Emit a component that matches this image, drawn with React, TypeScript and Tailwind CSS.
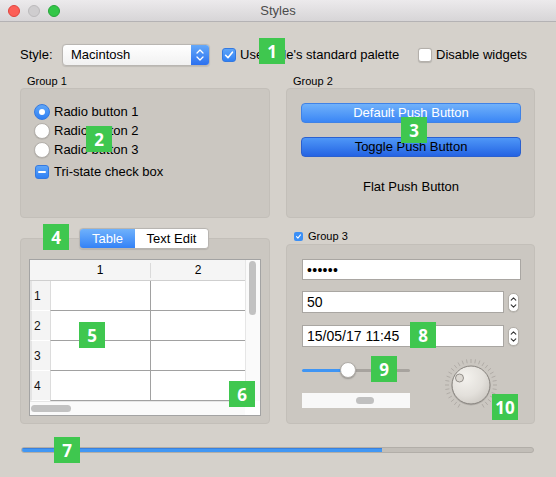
import React from "react";

function Check({ size = 14, small = false }: { size?: number; small?: boolean }) {
  return (
    <div
      className={
        small
          ? "w-[9px] h-[9px] rounded-[2px] bg-[#3b8ff6] flex items-center justify-center shrink-0"
          : "w-[14px] h-[14px] rounded-[3px] bg-linear-to-b from-[#5ea5f8] to-[#2f80f4] border border-[#3479e0] flex items-center justify-center shrink-0"
      }
    >
      <svg width={size - 2} height={size - 2} viewBox="0 0 12 12">
        <path d="M2.6 6.3 L5 8.7 L9.4 3.2" fill="none" stroke="white" strokeWidth={small ? 1.8 : 1.6} strokeLinecap="round" strokeLinejoin="round" />
      </svg>
    </div>
  );
}

function Radio({ on }: { on?: boolean }) {
  return on ? (
    <div className="w-[16px] h-[16px] rounded-full bg-linear-to-b from-[#5fa6f8] to-[#2f80f4] border border-[#3479e0] flex items-center justify-center shrink-0">
      <div className="w-[6px] h-[6px] rounded-full bg-white" />
    </div>
  ) : (
    <div className="w-[16px] h-[16px] rounded-full bg-white border border-[#b4b0ab] shadow-[0_0.5px_1px_rgba(0,0,0,0.15)] shrink-0" />
  );
}

function Spin() {
  return (
    <div className="w-[11px] h-[19px] rounded-[5px] bg-white border border-[#b3afa9] shadow-[0_0.5px_1px_rgba(0,0,0,0.15)] shrink-0">
      <svg width="9" height="17" viewBox="0 0 9 17">
        <path d="M2.2 6.2 L4.5 3.9 L6.8 6.2" fill="none" stroke="#333" strokeWidth="1.1" strokeLinecap="round" strokeLinejoin="round" />
        <path d="M2.2 10.8 L4.5 13.1 L6.8 10.8" fill="none" stroke="#333" strokeWidth="1.1" strokeLinecap="round" strokeLinejoin="round" />
      </svg>
    </div>
  );
}

function Badge({ n, cls }: { n: string; cls: string }) {
  return (
    <div
      className={
        "absolute h-[26px] w-[26px] bg-[#3fc74f] text-white font-bold text-[17px] leading-none flex items-center justify-center font-['Open_Sans',sans-serif] " +
        cls
      }
    >
      {n}
    </div>
  );
}

function Dial() {
  const ticks = [] as React.ReactElement[];
  for (let a = -150; a <= 150; a += 10) {
    const r = (a * Math.PI) / 180;
    const s = Math.sin(r);
    const c = -Math.cos(r);
    ticks.push(
      <line key={a} x1={30 + s * 22} y1={30 + c * 22} x2={30 + s * 26} y2={30 + c * 26} stroke="#a9a59f" strokeWidth="0.8" />
    );
  }
  return (
    <svg width="60" height="60" viewBox="0 0 60 60" className="shrink-0">
      <defs>
        <radialGradient id="dg" cx="0.35" cy="0.3" r="0.8">
          <stop offset="0" stopColor="#f4f2ee" />
          <stop offset="0.6" stopColor="#e3e0db" />
          <stop offset="1" stopColor="#cbc7c1" />
        </radialGradient>
      </defs>
      {ticks}
      <circle cx="30" cy="31" r="19.5" fill="rgba(0,0,0,0.12)" />
      <circle cx="30" cy="30" r="19" fill="url(#dg)" stroke="#87837e" strokeWidth="1" />
      <circle cx="18.5" cy="23" r="4" fill="#dcd8d2" stroke="#8a8680" strokeWidth="0.9" />
    </svg>
  );
}

export default function App() {
  const rows = ["1", "2", "3", "4"];
  return (
    <div className="w-[556px] h-[477px] relative overflow-hidden bg-[#d5d1cb] font-['Liberation_Sans',Arial,sans-serif] text-[13px] text-black">
      {/* Title bar */}
      <div className="h-[22px] grid grid-cols-[1fr_auto_1fr] items-center bg-linear-to-b from-[#eceaec] to-[#d7d5d7] border-b border-[#b4b2b4]">
        <div className="flex items-center gap-[8px] pl-[8px]">
          <div className="w-[12px] h-[12px] rounded-full bg-[#fc5f57] border border-[#e0443e]" />
          <div className="w-[12px] h-[12px] rounded-full bg-[#cfcdcf] border border-[#bcbabc]" />
          <div className="w-[12px] h-[12px] rounded-full bg-[#33c748] border border-[#27a53a]" />
        </div>
        <div className="text-[13px] text-[#4b4b4b] leading-none">Styles</div>
        <div />
      </div>

      {/* Row 1 */}
      <div className="mt-[22px] h-[22px] flex items-center pl-[20px]">
        <span className="w-[42px]">Style:</span>
        <div className="w-[148px] h-[22px] flex rounded-[4px] border border-[#b9b6b2] bg-linear-to-b from-white to-[#f1f1f1] shadow-[0_0.5px_1px_rgba(0,0,0,0.1)] overflow-hidden">
          <div className="flex-1 flex items-center pl-[8px]">Macintosh</div>
          <div className="w-[18px] h-full bg-linear-to-b from-[#64a8f9] to-[#2c70ef] flex items-center justify-center">
            <svg width="10" height="16" viewBox="0 0 10 16">
              <path d="M2 6 L5 3 L8 6" fill="none" stroke="white" strokeWidth="1.3" strokeLinecap="round" strokeLinejoin="round" />
              <path d="M2 10 L5 13 L8 10" fill="none" stroke="white" strokeWidth="1.3" strokeLinecap="round" strokeLinejoin="round" />
            </svg>
          </div>
        </div>
        <div className="ml-[12px]">
          <Check />
        </div>
        <span className="ml-[4px] inline-block w-[168px] whitespace-nowrap">Use style's standard palette</span>
        <div className="ml-[10px] w-[14px] h-[14px] rounded-[3px] bg-white border border-[#b4b0ab] shadow-[0_0.5px_1px_rgba(0,0,0,0.15)]" />
        <span className="ml-[4px] whitespace-nowrap">Disable widgets</span>
      </div>

      {/* Groups 1 & 2 */}
      <div className="flex gap-[16px] px-[20px] mt-[8px]">
        <div className="w-[250px] flex flex-col">
          <div className="h-[14px] pl-[7px] text-[11px] leading-[14px]">Group 1</div>
          <div className="h-[130px] rounded-[4px] bg-[#cbc7c1] border border-[#c3bfb9] pt-[13px] pl-[13px] flex flex-col">
            <div className="h-[19px] flex items-center gap-[4px]">
              <Radio on />
              <span>Radio button 1</span>
            </div>
            <div className="h-[19px] flex items-center gap-[4px]">
              <Radio />
              <span>Radio button 2</span>
            </div>
            <div className="h-[19px] flex items-center gap-[4px]">
              <Radio />
              <span>Radio button 3</span>
            </div>
            <div className="h-[19px] mt-[3px] flex items-center gap-[5px] pl-[1px]">
              <div className="w-[14px] h-[14px] rounded-[3px] bg-linear-to-b from-[#5ea5f8] to-[#2f80f4] border border-[#3479e0] flex items-center justify-center">
                <div className="w-[8px] h-[2px] bg-white rounded-[1px]" />
              </div>
              <span>Tri-state check box</span>
            </div>
          </div>
        </div>
        <div className="w-[249px] flex flex-col">
          <div className="h-[14px] pl-[7px] text-[11px] leading-[14px]">Group 2</div>
          <div className="h-[130px] rounded-[4px] bg-[#cbc7c1] border border-[#c3bfb9] pt-[14px] pl-[14px] pr-[13px] flex flex-col">
            <div className="h-[20px] rounded-[4px] bg-linear-to-b from-[#70b1fa] to-[#3a86f5] border border-[#3f82e6] text-white flex items-center justify-center">
              Default Push Button
            </div>
            <div className="h-[20px] mt-[14px] rounded-[4px] bg-linear-to-b from-[#4f97f7] to-[#2563e3] border border-[#2a60cf] text-black flex items-center justify-center">
              Toggle Push Button
            </div>
            <div className="h-[20px] mt-[20px] flex items-center justify-center">Flat Push Button</div>
          </div>
        </div>
      </div>

      {/* Bottom groups */}
      <div className="flex gap-[16px] px-[20px] mt-[10px]">
        <div className="w-[250px] flex flex-col">
          <div className="h-[21px] pl-[59px] flex relative z-10">
            <div className="flex rounded-[4px] border border-[#b8b5b1] overflow-hidden shadow-[0_0.5px_1px_rgba(0,0,0,0.1)]">
              <div className="w-[55px] bg-linear-to-b from-[#6fb1fb] to-[#3382f6] text-white flex items-center justify-center">Table</div>
              <div className="w-[73px] bg-white flex items-center justify-center">Text Edit</div>
            </div>
          </div>
          <div className="-mt-[11px] h-[186px] rounded-[4px] bg-[#cbc7c1] border border-[#c3bfb9] pt-[20px] pl-[8px]">
            <div className="w-[232px] h-[157px] border border-[#a3a3a3] bg-white flex flex-col overflow-hidden text-[12px]">
              <div className="flex h-[141px]">
                <div className="flex-1 flex flex-col">
                  <div className="h-[21px] bg-[#f5f5f5] border-b border-[#cfcfcf] flex">
                    <div className="w-[20px]" />
                    <div className="w-[101px] flex items-center justify-center">
                      <span className="flex-1 text-center">1</span>
                      <span className="w-px h-[15px] bg-[#dadada]" />
                    </div>
                    <div className="flex-1 flex items-center justify-center">2</div>
                  </div>
                  {rows.map((r) => (
                    <div key={r} className="h-[30px] flex">
                      <div className="w-[20px] bg-[#f4f4f4] border-l-2 border-[#e4e4e4] border-b border-b-[#ffffff] flex items-center pl-[2px] text-[#111]">
                        {r}
                      </div>
                      <div className="w-[101px] border-b border-r border-[#a1a1a1] border-l border-l-[#dcdcdc]" />
                      <div className="flex-1 border-b border-[#a1a1a1]" />
                    </div>
                  ))}
                </div>
                <div className="w-[15px] bg-[#fafafa] border-l border-[#e6e6e6] pl-[3px] pt-[1px]">
                  <div className="w-[7px] h-[54px] rounded-full bg-[#c2c2c2]" />
                </div>
              </div>
              <div className="flex flex-1">
                <div className="flex-1 bg-[#fafafa] border-t border-[#e6e6e6] pt-[3px] pl-[1px]">
                  <div className="w-[40px] h-[7px] rounded-full bg-[#c2c2c2]" />
                </div>
                <div className="w-[15px] bg-white" />
              </div>
            </div>
          </div>
        </div>

        <div className="w-[249px] flex flex-col">
          <div className="h-[16px] pl-[8px] flex items-center gap-[5px] text-[11px]">
            <Check size={9} small />
            <span>Group 3</span>
          </div>
          <div className="h-[180px] rounded-[4px] bg-[#cbc7c1] border border-[#c3bfb9] pt-[14px] pl-[15px] pr-[13px] flex flex-col">
            <div className="h-[21px] bg-white border border-[#a9a6a2] flex items-center pl-[4px] text-[14px] tracking-[0.3px] leading-none">
              ••••••
            </div>
            <div className="mt-[11px] h-[22px] flex items-center gap-[4px]">
              <div className="w-[202px] h-[22px] bg-white border border-[#a9a6a2] flex items-center pl-[4px] text-[14px]">50</div>
              <Spin />
            </div>
            <div className="mt-[12px] h-[22px] flex items-center gap-[4px]">
              <div className="w-[202px] h-[22px] bg-white border border-[#a9a6a2] flex items-center pl-[4px] text-[14px]">15/05/17 11:45</div>
              <Spin />
            </div>
            <div className="flex items-start">
              <div className="w-[108px] mt-[15px] flex flex-col">
                <div className="h-[16px] flex items-center">
                  <div className="w-[44px] h-[3px] rounded-l-full bg-[#3f95f4]" />
                  <div className="w-[16px] h-[16px] rounded-full bg-white border border-[#b1ada8] shadow-[0_1px_1.5px_rgba(0,0,0,0.25)] shrink-0 -mx-[6px] relative z-10" />
                  <div className="flex-1 h-[3px] rounded-r-full bg-[#a7a39e]" />
                </div>
                <div className="mt-[15px] h-[15px] bg-[#f8f8f8] pl-[54px] flex items-center">
                  <div className="w-[18px] h-[7px] rounded-full bg-[#c0c0c0]" />
                </div>
              </div>
              <div className="ml-[31px] mt-[8px]">
                <Dial />
              </div>
            </div>
          </div>
        </div>
      </div>

      {/* Progress */}
      <div className="mt-[23px] pl-[21px]">
        <div className="w-[513px] h-[6px] rounded-full bg-[#c2beb8] border border-[#b2aea8] overflow-hidden">
          <div className="h-full bg-[#4197f4] border-t border-[#3a80dc]" style={{ width: "70.4%" }} />
        </div>
      </div>

      {/* Badges */}
      <Badge n="1" cls="left-[259px] top-[38px]" />
      <Badge n="2" cls="left-[86px] top-[126px]" />
      <Badge n="3" cls="left-[401px] top-[117px]" />
      <Badge n="4" cls="left-[43px] top-[224px]" />
      <Badge n="5" cls="left-[79px] top-[322px]" />
      <Badge n="6" cls="left-[229px] top-[381px]" />
      <Badge n="7" cls="left-[54px] top-[437px]" />
      <Badge n="8" cls="left-[410px] top-[322px]" />
      <Badge n="9" cls="left-[371px] top-[356px]" />
      <Badge n="10" cls="left-[492px] top-[394px] text-[16px]" />
    </div>
  );
}
